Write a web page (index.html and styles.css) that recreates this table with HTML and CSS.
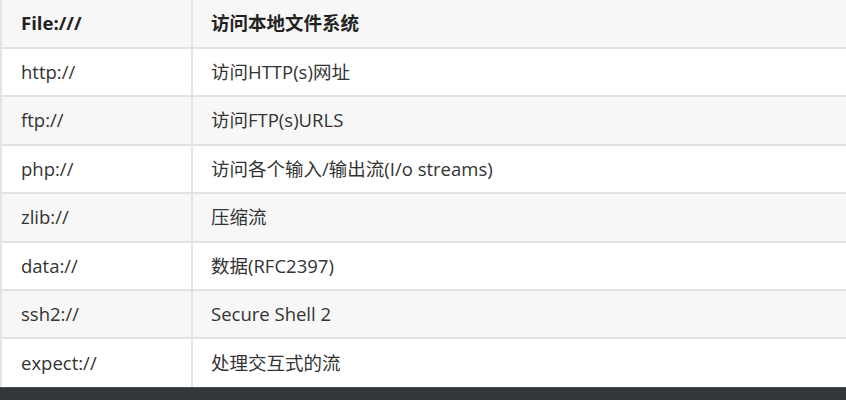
FILE: index.html
```html
<!DOCTYPE html>
<html lang="zh">
<head>
<meta charset="utf-8">
<link rel="stylesheet" href="styles.css">
</head>
<body>
<div class="page">
  <table class="proto">
    <thead>
      <tr><th class="c1">File:///</th><th class="c2">访问本地文件系统</th></tr>
    </thead>
    <tbody>
      <tr><td class="c1">http://</td><td class="c2">访问HTTP(s)网址</td></tr>
      <tr><td class="c1">ftp://</td><td class="c2">访问FTP(s)URLS</td></tr>
      <tr><td class="c1">php://</td><td class="c2">访问各个输入/输出流(I/o streams)</td></tr>
      <tr><td class="c1">zlib://</td><td class="c2">压缩流</td></tr>
      <tr><td class="c1">data://</td><td class="c2">数据(RFC2397)</td></tr>
      <tr><td class="c1">ssh2://</td><td class="c2">Secure Shell 2</td></tr>
      <tr><td class="c1">expect://</td><td class="c2">处理交互式的流</td></tr>
    </tbody>
  </table>
  <div class="footer-bar"></div>
</div>
</body>
</html>
```
FILE: styles.css
```css
html, body {
  margin: 0;
  padding: 0;
  background: #ffffff;
}
.page {
  width: 846px;
  height: 400px;
  overflow: hidden;
  display: flex;
  flex-direction: column;
}
.proto {
  border-collapse: collapse;
  width: 100%;
  font-family: "Open Sans", "Noto Sans CJK SC", sans-serif;
  font-size: 18.5px;
  color: #333333;
  border-left: 2px solid #e4e4e4;
  flex: none;
}
.proto th,
.proto td {
  height: 48.4px;
  padding: 0 0 0 18px;
  text-align: left;
  vertical-align: middle;
  border-bottom: 2px solid #e2e2e2;
  box-sizing: border-box;
  line-height: 1;
}
.proto .c1 {
  width: 191px;
  padding-left: 19px;
  border-right: 2px solid #e4e4e4;
}
.proto th {
  font-weight: 700;
  color: #222222;
  background: #f7f7f7;
  height: 48px;
}
.proto tbody tr:nth-child(even) td {
  background: #f7f7f7;
}
.proto tbody tr:last-child td {
  border-bottom: none;
}
.footer-bar {
  flex: 1;
  background: #33373a;
  border-top: 1px solid #4a4e52;
}
```
